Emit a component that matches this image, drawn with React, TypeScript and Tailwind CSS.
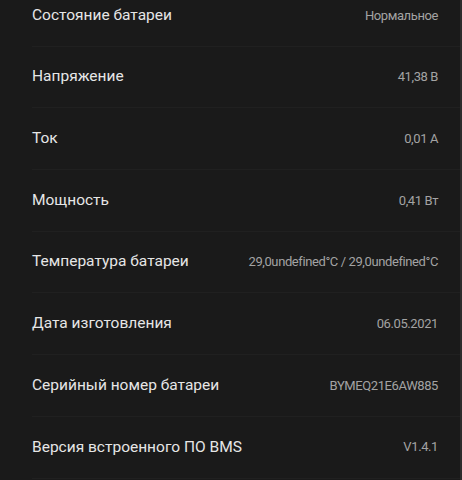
import React from 'react';

const rows: [string, string][] = [
  ['Состояние батареи', 'Нормальное'],
  ['Напряжение', '41,38 В'],
  ['Ток', '0,01 A'],
  ['Мощность', '0,41 Вт'],
  ['Температура батареи', '29,0undefined°C / 29,0undefined°C'],
  ['Дата изготовления', '06.05.2021'],
  ['Серийный номер батареи', 'BYMEQ21E6AW885'],
  ['Версия встроенного ПО BMS', 'V1.4.1'],
];

const App: React.FC = () => {
  return (
    <div className="h-[480px] w-[462px] overflow-hidden bg-[#1a1a1a] flex" style={{ fontFamily: 'Roboto, "Liberation Sans", sans-serif' }}>
      <div className="flex-1 -mt-[15px] pl-[32px]">
        {rows.map(([label, value]) => (
          <div key={label} className="h-[61.7px] flex items-center justify-between border-b border-[#202020] pr-[22px]">
            <span className="text-[15.5px] text-[#e6e6e6]">{label}</span>
            <span className="text-[13px] tracking-[-0.4px] text-[#a3a3a3]">{value}</span>
          </div>
        ))}
      </div>
      <div className="w-[2px] bg-[#2c2c2c]" />
    </div>
  );
};

export default App;
